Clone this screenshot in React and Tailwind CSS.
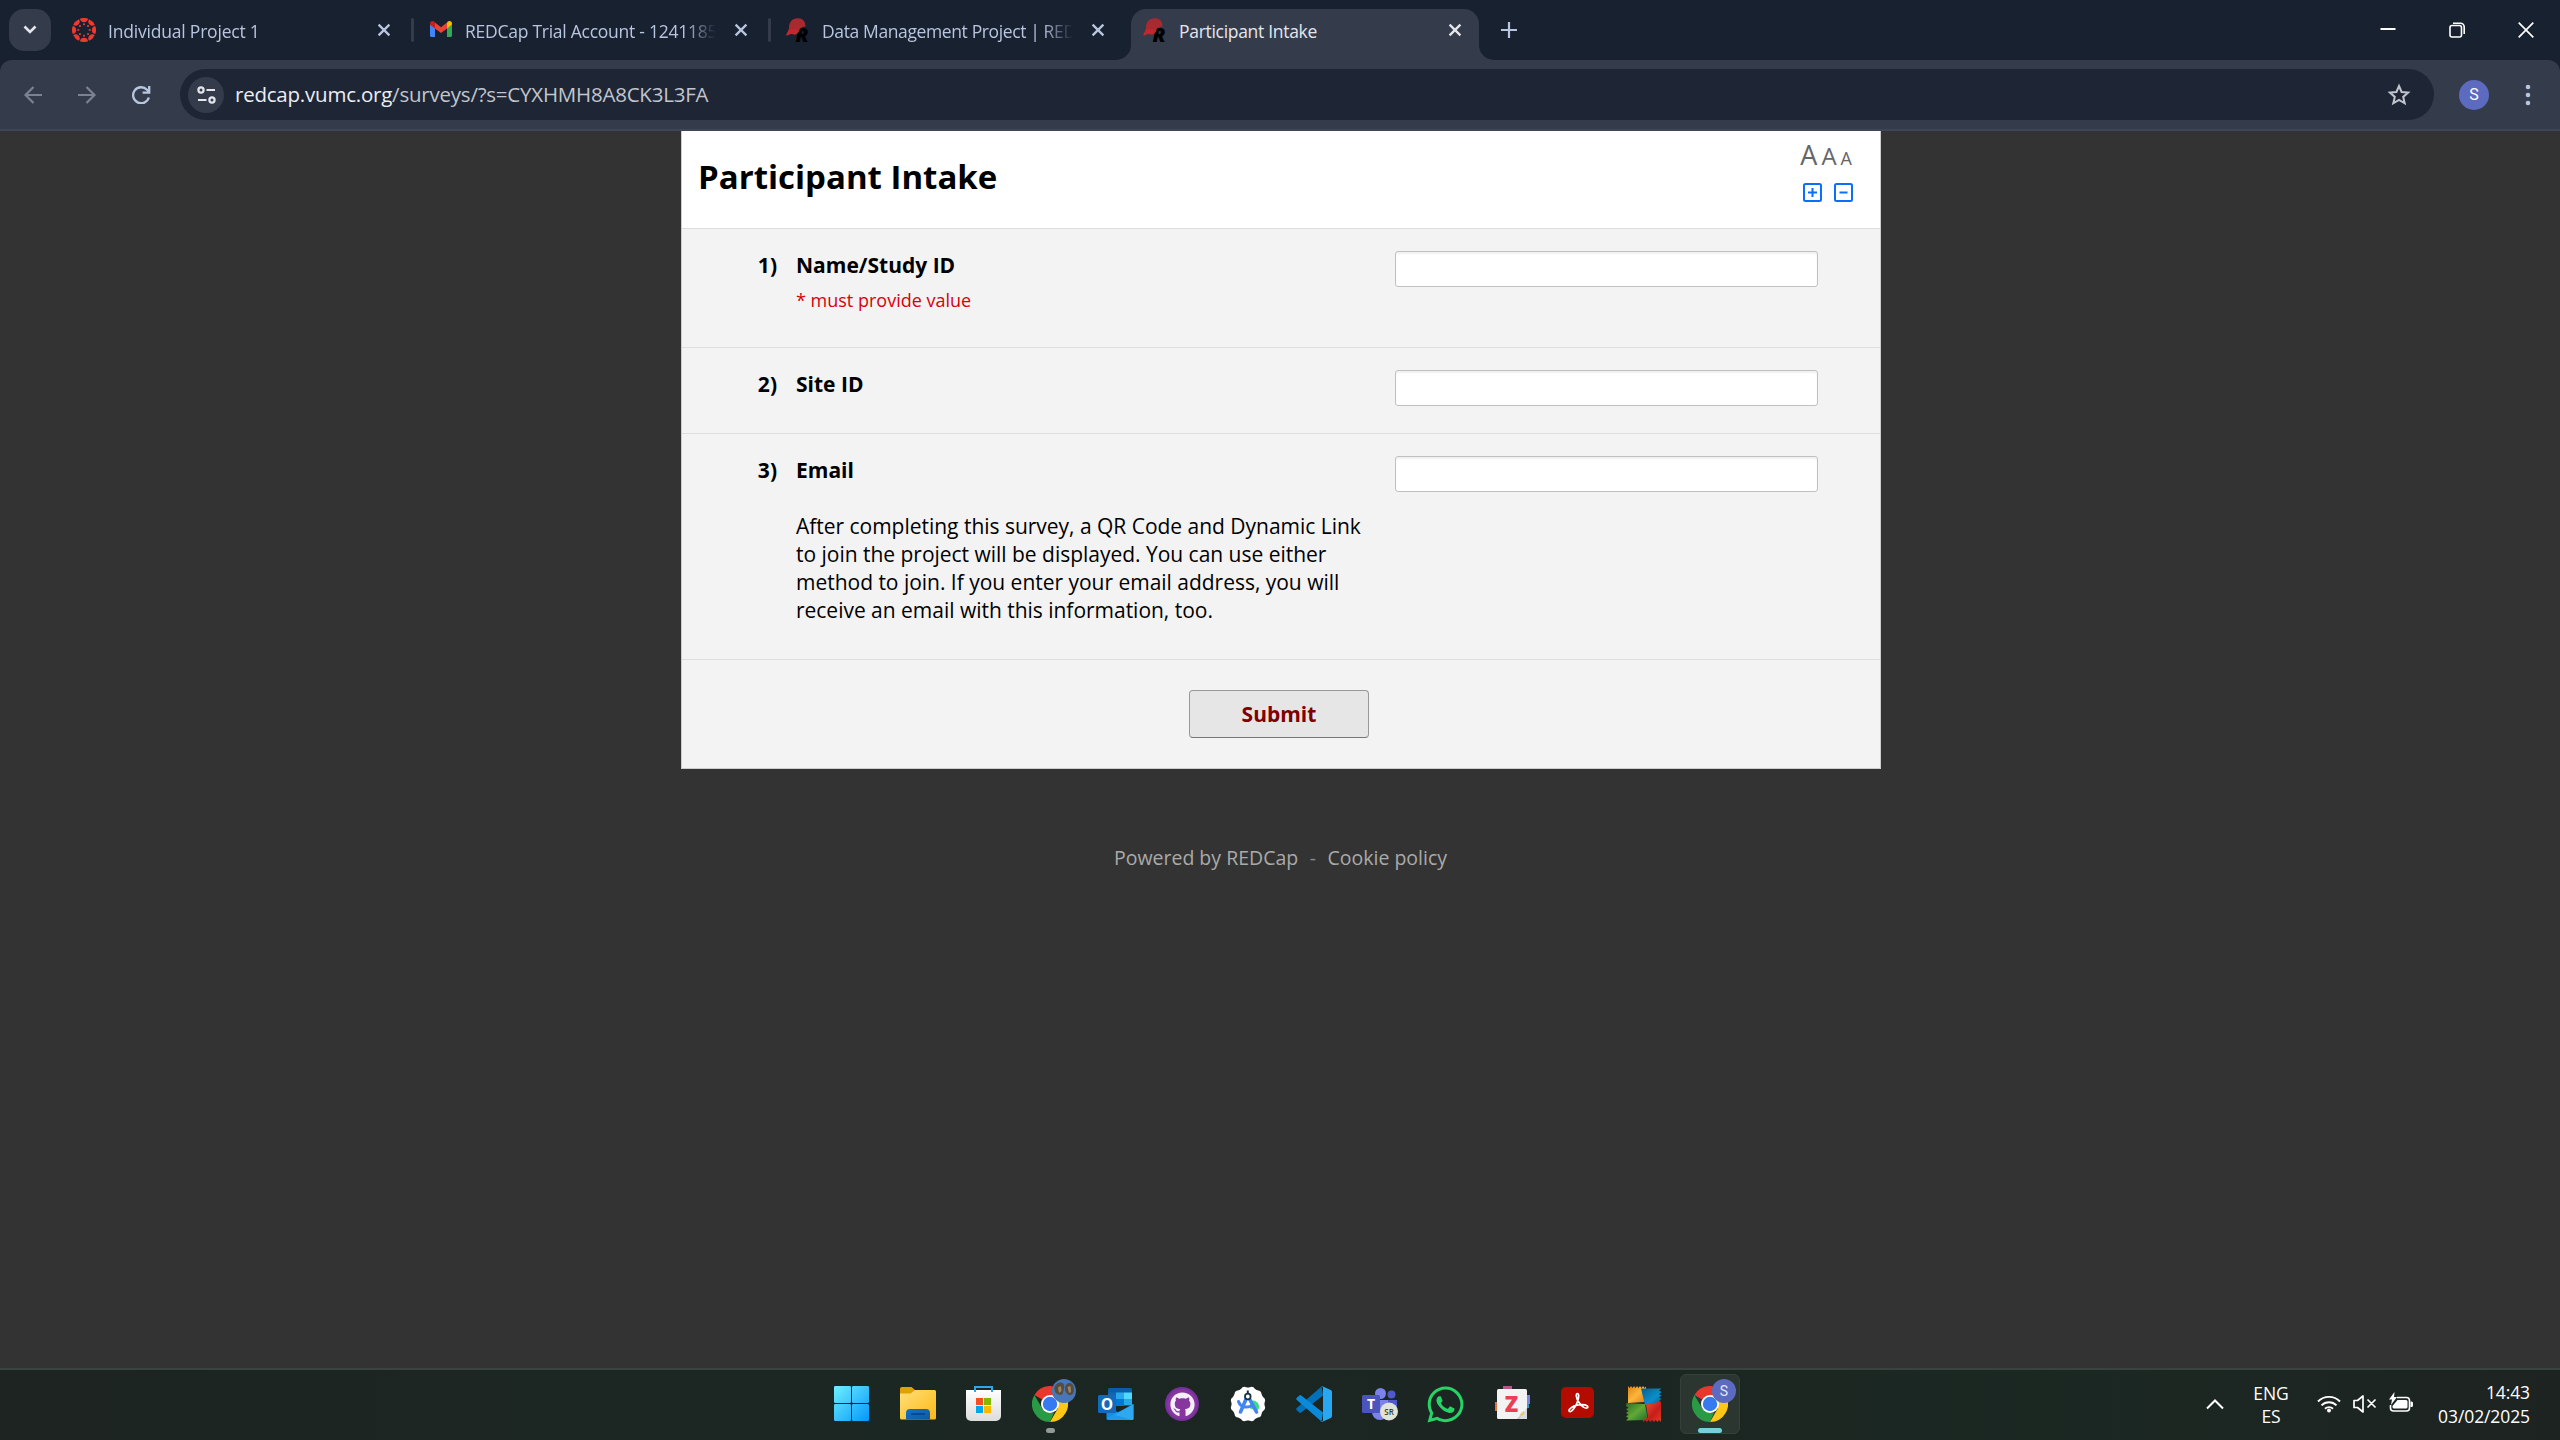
import React from "react";
import { FaGithub, FaWhatsapp } from "react-icons/fa";

const CanvasLogo = () => (
  <svg width="24" height="24" viewBox="0 0 24 24" fill="#ee3a2e">
    {[0, 45, 90, 135, 180, 225, 270, 315].map((a) => (
      <g key={a} transform={`rotate(${a} 12 12)`}>
        <path d="M7.9 .8 Q12 -.9 16.1 .8 A4.200 4.300 0 0 1 7.9 .8Z" />
        <circle cx="12" cy="6.300" r="1.050" />
      </g>
    ))}
  </svg>
);

const GmailLogo = () => (
  <svg width="24" height="24" viewBox="0 0 24 24">
    <path d="M1 7v10.500A1.500 1.500 0 0 0 2.500 19H6V9.700L1 6z" fill="#4285f4" />
    <path d="M18 9.700V19h3.500a1.500 1.500 0 0 0 1.500-1.500V6z" fill="#34a853" />
    <path d="M18 4.700v5.700l5-3.800V5.400C23 3.200 20.500 2.200 18.800 3.500z" fill="#fbbc04" />
    <path d="M6 10.400V4.600l6 4.600 6-4.600v5.800L12 15z" fill="#ea4335" />
    <path d="M1 5.400v1.300l5 3.800V4.700L5.200 3.500C3.500 2.200 1 3.200 1 5.400z" fill="#c5221f" />
  </svg>
);

const RedcapLogo = () => (
  <svg width="24" height="24" viewBox="0 0 24 24">
    <text x="9.500" y="24" fontSize="20" fontWeight="800" fontStyle="italic" fontFamily="Open Sans, sans-serif" fill="#000">R</text>
    <path d="M3 11C2.500 4 6.500 .3 11.500 .2c4-.1 6.500 1.500 7.500 4.800l.6 3.600c-3 .2-5 1.200-6 3-.6 2.500-2 4-4.500 5-1.500-.5-2.500-.8-4-.6-1.800.2-3 .8-4.100 1.800-.8-.6-.8-1.500 0-2.600z" fill="#a8292f" />
    <path d="M3 11.500c3.500-.8 7-.3 10.400.6-.8 2.300-2.200 3.700-4.300 4.500-3-.9-5.500-.8-8.100 1.200-.6-.9-.4-1.800.3-2.800z" fill="#c1272d" />
  </svg>
);

const Close = ({ color }) => (
  <svg width="14" height="14" viewBox="0 0 14 14" stroke={color} strokeWidth="2.300" className="shrink-0">
    <path d="M1.600 1.600l10.800 10.800M12.400 1.600L1.600 12.400" />
  </svg>
);

const Tab = ({ icon, title, active, spacing }) => (
  <div
    className={
      active
        ? "relative flex h-[51px] w-[348px] shrink-0 items-start rounded-t-[15px] bg-[#343c4c] pt-[9px] pl-3"
        : "flex h-[51px] w-[348px] shrink-0 items-start pt-[9px] pl-3"
    }
  >
    {active && (
      <>
        <svg className="absolute bottom-0 left-[-15px]" width="15" height="15" fill="#343c4c"><path d="M15 0v15H0A15 15 0 0 0 15 0z" /></svg>
        <svg className="absolute right-[-15px] bottom-0" width="15" height="15" fill="#343c4c"><path d="M0 0v15h15A15 15 0 0 1 0 0z" /></svg>
      </>
    )}
    {icon}
    <div
      className={`ml-3 h-[26px] w-[251px] overflow-hidden whitespace-nowrap text-[17.5px] leading-[26px] ${spacing} ${
        active ? "text-[#e4e6ec]" : "text-[#b8c5de] [mask-image:linear-gradient(to_right,#000_220px,transparent_251px)]"
      }`}
    >
      {title}
    </div>
    <div className="ml-[18px] flex h-6 items-center"><Close color={active ? "#e4e6ec" : "#b8c5de"} /></div>
  </div>
);

const Divider = () => (
  <div className="flex h-[42px] w-[9px] shrink-0 items-center justify-center"><div className="h-6 w-[3px] rounded bg-[#343c4c]" /></div>
);

const TabStrip = () => (
  <div className="flex h-[60px] bg-[#182130] pt-[9px]">
    <div className="ml-[9px] flex size-[42px] shrink-0 items-center justify-center rounded-[15px] bg-[#343c4c]">
      <svg width="14" height="10" viewBox="0 0 14 10" fill="none" stroke="#e4e6ec" strokeWidth="2.600"><path d="M1.500 1.500L7 7l5.500-5.500" /></svg>
    </div>
    <div className="ml-[9px] flex">
      <Tab icon={<CanvasLogo />} title="Individual Project 1" spacing="tracking-[-0.2px]" />
      <Divider />
      <Tab icon={<GmailLogo />} title="REDCap Trial Account - 124118&#53;" spacing="tracking-[-0.26px]" />
      <Divider />
      <Tab icon={<RedcapLogo />} title="Data Management Project | RED" spacing="tracking-[-0.38px]" />
      <div className="w-[9px]" />
      <Tab icon={<RedcapLogo />} title="Participant Intake" active spacing="tracking-[-0.3px]" />
    </div>
    <svg className="mt-[13px] ml-[22px]" width="16" height="16" stroke="#b8c5de" strokeWidth="2.200"><path d="M8 0v16M0 8h16" /></svg>
    <div className="mt-[13px] mr-[26px] ml-auto flex gap-[53px]">
      <svg width="16" height="16" stroke="#fff" strokeWidth="2"><path d="M.500 7h15" /></svg>
      <svg width="16" height="16" fill="none" stroke="#fff" strokeWidth="1.600">
        <rect x="1" y="3.500" width="11.500" height="11.500" rx="2" />
        <path d="M4 1.200h7.500a3.700 3.700 0 0 1 3.700 3.700V12" />
      </svg>
      <svg width="16" height="16" stroke="#fff" strokeWidth="1.700"><path d="M.7.7l14.600 14.600M15.300.7L.7 15.300" /></svg>
    </div>
  </div>
);

const Toolbar = () => (
  <div className="bg-[#182130]">
    <div className="flex h-[71px] items-start rounded-t-[12px] border-b-2 border-[#3f4757] bg-[#343c4c] pt-[9px]">
      <div className="ml-6 flex h-[51px] items-center">
        <svg width="18" height="18" fill="none" stroke="#7d8290" strokeWidth="2.200"><path d="M18 9H2M9.500 1L1.500 9l8 8" /></svg>
        <svg className="ml-9" width="18" height="18" fill="none" stroke="#7d8290" strokeWidth="2.200"><path d="M0 9h16M8.500 1l8 8-8 8" /></svg>
        <svg className="ml-9" width="19" height="18" fill="none" stroke="#b8c5de" strokeWidth="2.300"><path d="M16.800 11.500A8 8 0 1 1 15 3.800L17 6" /><path d="M17.200 0v6.600h-6.600" /></svg>
      </div>
      <div className="ml-[29px] flex h-[51px] w-[2254px] items-center rounded-full bg-[#1e2636] pl-2">
        <div className="flex size-9 items-center justify-center rounded-full bg-[#343c4c]">
          <svg width="19" height="18" fill="none" stroke="#e4e6ec" strokeWidth="2.200">
            <circle cx="4" cy="4" r="2.600" /><path d="M9.500 4H18M1 14h8.500" /><circle cx="15" cy="14" r="2.600" />
          </svg>
        </div>
        <div className="mb-[2px] ml-[11px] text-[20.500px] leading-7 tracking-[-0.22px] text-[#c2c5cc]">
          <span className="text-[#eceef2]">redcap.vumc.org</span>/surveys/?s=CYXHMH8A8CK3L3FA
        </div>
        <svg className="mr-[23px] ml-auto" width="24" height="24" viewBox="0 0 24 24" fill="none" stroke="#c2c5cc" strokeWidth="2">
          <path d="M12 3l2.600 6 6.500.6-4.900 4.300 1.500 6.400-5.700-3.400-5.700 3.400 1.500-6.400L2.900 9.600 9.400 9z" />
        </svg>
      </div>
      <div className="mt-[11px] ml-[25px] flex size-[30px] items-center justify-center rounded-full bg-[#5c6bc0] font-[Roboto,sans-serif] text-[16px] text-white">S</div>
      <svg className="mt-[15px] ml-[36px]" width="6" height="22" fill="#b8c5de"><circle cx="3" cy="3" r="2.300" /><circle cx="3" cy="11" r="2.300" /><circle cx="3" cy="19" r="2.300" /></svg>
    </div>
  </div>
);

const Question = ({ number, label, height, children }) => (
  <div className={`flex border-b border-[#ddd] ${height}`}>
    <div className="mt-[22px] w-[95px] text-right leading-7 font-bold">{number})</div>
    <div className="mt-[22px] ml-[19px] w-[580px]">
      <div className="leading-7 font-bold">{label}</div>
      {children}
    </div>
    <input className="mt-[22px] ml-[19px] h-9 w-[423px] rounded-[3px] border border-[#c0c0c0] bg-white shadow-[inset_0_2px_2px_rgba(0,0,0,0.06)]" />
  </div>
);

const Survey = () => (
  <main className="flex h-[1237px] flex-col items-center bg-[#333] pl-[2px] text-[21px] text-black">
    <div className="w-[1200px] border-x border-b border-[#ccc] bg-[#f3f3f3]">
      <div className="flex h-[98px] justify-between border-b border-[#ddd] bg-white">
        <h1 className="mt-6 ml-4 text-[33px] leading-[44px] font-bold">Participant Intake</h1>
        <div className="mr-[27px] flex flex-col items-end">
          <div className="mt-[10px] mr-[1px] flex h-[28px] items-baseline gap-1 leading-7 text-[#666]">
            <span className="text-[27px]">A</span><span className="text-[24px]">A</span><span className="text-[18px]">A</span>
          </div>
          <div className="mt-[14px] flex gap-[12px]">
            <svg width="19" height="19" fill="none" stroke="#0d6efd" strokeWidth="2"><rect x="1" y="1" width="17" height="17" rx="1.500" /><path d="M9.500 5v9M5 9.500h9" /></svg>
            <svg width="19" height="19" fill="none" stroke="#0d6efd" strokeWidth="2"><rect x="1" y="1" width="17" height="17" rx="1.500" /><path d="M5.500 9.500h8" /></svg>
          </div>
        </div>
      </div>
      <Question number={1} label="Name/Study ID" height="h-[119px]">
        <div className="mt-[7px] text-[18px] leading-7 text-[#d8000c]">* must provide value</div>
      </Question>
      <Question number={2} label="Site ID" height="h-[86px]" />
      <Question number={3} label="Email" height="h-[226px]">
        <p className="mt-7 leading-7 tracking-[-0.02px]">
          After completing this survey, a QR Code and Dynamic Link<br />
          to join the project will be displayed. You can use either<br />
          method to join. If you enter your email address, you will<br />
          receive an email with this information, too.
        </p>
      </Question>
      <div className="flex h-[108px] justify-center pt-[30px] pr-1">
        <button className="h-12 w-[180px] rounded-[4px] border border-[#999] border-b-[#777] bg-[#e6e6e6] pt-[2px] text-[21px] font-bold text-[#800000]">Submit</button>
      </div>
    </div>
    <footer className="mt-[75px] flex pr-[1px] text-[19.500px] leading-7 text-[#aaa]">
      <span>Powered by REDCap</span><span className="mx-[11.500px] text-[#888]">-</span><span>Cookie policy</span>
    </footer>
  </main>
);

const Windows = () => (
  <svg width="36" height="36" viewBox="0 0 36 36">
    <defs><linearGradient id="win" x1="0" y1="0" x2="36" y2="36" gradientUnits="userSpaceOnUse"><stop stopColor="#6ff0ff" /><stop offset="1" stopColor="#0094fb" /></linearGradient></defs>
    <g fill="url(#win)"><rect y="0" width="17" height="17" rx="1.300" /><rect x="18" width="17" height="17" rx="1.300" /><rect y="18" width="17" height="17" rx="1.300" /><rect x="18" y="18" width="17" height="17" rx="1.300" /></g>
  </svg>
);

const Explorer = () => (
  <svg width="36" height="36" viewBox="0 0 36 36">
    <defs><linearGradient id="fold" x1="0" y1="0" x2="1" y2="1"><stop stopColor="#ffe07a" /><stop offset="1" stopColor="#fdb713" /></linearGradient>
      <linearGradient id="foldb" x1="0" y1="0" x2="1" y2="1"><stop stopColor="#1173c9" /><stop offset="1" stopColor="#0f5aa0" /></linearGradient></defs>
    <path d="M0 3a2 2 0 0 1 2-2h9.500l4 3.500V8H0z" fill="#e0a106" />
    <path d="M0 7.500h10.500L15 4h19.500A1.500 1.500 0 0 1 36 5.500V32a1.500 1.500 0 0 1-1.500 1.500h-33A1.500 1.500 0 0 1 0 32z" fill="url(#fold)" />
    <path d="M6 33.500V27a4 4 0 0 1 4-4h16a4 4 0 0 1 4 4v6.500z" fill="url(#foldb)" />
    <path d="M11 28h14" stroke="#0a3f78" strokeWidth="1.500" />
  </svg>
);

const Store = () => (
  <svg width="36" height="36" viewBox="0 0 36 36">
    <defs><linearGradient id="store" x1="0" y1="0" x2="0" y2="1"><stop stopColor="#fff" /><stop offset="1" stopColor="#dcdcdc" /></linearGradient></defs>
    <path d="M0 4h35v26a5 5 0 0 1-5 5h-25a5 5 0 0 1-5-5z" fill="url(#store)" />
    <path d="M9 6V1h17v5" fill="none" stroke="#2ba8e6" strokeWidth="2" />
    <path fill="#f25022" d="M10 12h7v7h-7z" /><path fill="#7fba00" d="M18 12h7v7h-7z" /><path fill="#00a4ef" d="M10 20h7v7h-7z" /><path fill="#ffb900" d="M18 20h7v7h-7z" />
  </svg>
);

const Chrome = () => (
  <svg width="36" height="36" viewBox="0 0 36 36">
    <path d="M18 18L2.400 9A18 18 0 0 1 33.600 9z" fill="#e8372b" />
    <path d="M18 9h15.600A18 18 0 0 1 18 36l7.800-13.500z" fill="#fdc716" />
    <path d="M2.400 9l7.800 13.500L18 27l4-.3L18 36A18 18 0 0 1 2.400 9z" fill="#2b9a45" />
    <circle cx="18" cy="18" r="9" fill="#fff" /><circle cx="18" cy="18" r="7.200" fill="#357af0" />
  </svg>
);

const Outlook = () => (
  <svg width="36" height="36" viewBox="0 0 36 36">
    <path d="M10 3.500A1.500 1.500 0 0 1 11.500 2h21A1.500 1.500 0 0 1 34 3.500V20H10z" fill="#0a5ea8" />
    <path d="M10 6.500h8V13h-8z" fill="#1066b5" /><path d="M18 6.500h8V13h-8z" fill="#28a8ea" /><path d="M26 6.500h8V13h-8z" fill="#50d9ff" />
    <path d="M18 13h8v7h-8z" fill="#0078d4" /><path d="M26 13h8v6h-8z" fill="#28a8ea" />
    <path d="M8.500 20v12.500A1.500 1.500 0 0 0 10 34h24z" fill="#1490df" /><path d="M35.500 18v14.500A1.500 1.500 0 0 1 34 34H12l-3-2z" fill="#2197e8" />
    <path d="M35.500 18L17 29l17 5a1.500 1.500 0 0 0 1.500-1.500z" fill="#35b1f5" opacity=".7" />
    <rect y="9" width="18" height="18" rx="1.500" fill="#0f6cbd" />
    <text x="9" y="23.500" fontSize="15.500" fontWeight="700" textAnchor="middle" fontFamily="Open Sans, sans-serif" fill="#fff">O</text>
  </svg>
);

const Github = () => (
  <div className="mt-[1px] flex size-[34px] items-center justify-center rounded-full border-2 border-[#75309b] bg-[#87359f]"><FaGithub size={25} color="#f5effa" /></div>
);

const AndroidStudio = () => (
  <svg width="36" height="36" viewBox="0 0 36 36">
    <g fill="#fff">{[0, 30, 60].map((a) => <rect key={a} x="4.500" y="4.500" width="27" height="27" rx="4" transform={`rotate(${a} 18 18)`} />)}<circle cx="18" cy="18" r="16.500" /></g>
    <path d="M20 15.500a6 6 0 0 1 9 5.500c0 2-1 3-2 3.500l-7-2z" fill="#3ddc84" />
    <g fill="none" stroke="#4285f4" strokeLinecap="round"><path d="M16.500 12L10.500 26M19 12l7.500 14" strokeWidth="3.600" /><path d="M8.500 15.500c1.500 5 7 7 12.500 4.500" strokeWidth="3" /></g>
    <circle cx="17.800" cy="10.500" r="2.800" fill="#fff" stroke="#173340" strokeWidth="1.800" /><path d="M17.800 4.500v3" stroke="#173340" strokeWidth="2" />
  </svg>
);

const VsCode = () => (
  <svg width="36" height="36" viewBox="0 0 36 36">
    <path d="M27 9.500L5.200 26.500a1.600 1.600 0 0 1-2 0L.8 24.300a1.500 1.500 0 0 1 0-2.200L25.500.6z" fill="#0070b8" />
    <path d="M27 26.500L5.200 9.500a1.600 1.600 0 0 0-2 0L.8 11.700a1.500 1.500 0 0 0 0 2.200l24.700 21.500z" fill="#0a8ad8" />
    <path d="M26.500 35.800a2.200 2.200 0 0 1-2.500-.5c1 .8 3 .2 3-1.300V2c0-1.500-2-2.100-3-1.300a2.200 2.200 0 0 1 2.500-.5l8.200 3.900A2.200 2.200 0 0 1 36 6v24a2.200 2.200 0 0 1-1.300 1.900z" fill="#28a8f3" />
  </svg>
);

const Teams = () => (
  <svg width="36" height="36" viewBox="0 0 36 36">
    <circle cx="18.500" cy="7.500" r="5.500" fill="#7b83eb" /><circle cx="29.500" cy="8.500" r="4" fill="#5059c9" />
    <path d="M23 14h12v9a6 6 0 0 1-12 2z" fill="#5059c9" /><path d="M10 14h16v12a8 8 0 0 1-16 0z" fill="#7b83eb" />
    <rect y="9" width="18" height="18" rx="1.500" fill="#4b53bc" />
    <text x="9" y="23" fontSize="14" fontWeight="700" textAnchor="middle" fontFamily="Open Sans, sans-serif" fill="#fff">T</text>
    <circle cx="27" cy="25.500" r="9" fill="#dfe3d8" />
    <text x="27" y="28.500" fontSize="8" fontWeight="600" textAnchor="middle" fontFamily="Open Sans, sans-serif" fill="#34402c">SR</text>
  </svg>
);

const Zotero = () => (
  <svg width="36" height="36" viewBox="0 0 36 36">
    <path d="M8 0h9v5H8z" fill="#b5568c" /><path d="M0 16h5v9H0z" fill="#e0703c" /><path d="M31 9h4v9h-4z" fill="#7a84e8" /><path d="M30 18h4v4h-4z" fill="#2f9fc0" />
    <path d="M3.500 3h27A1.500 1.500 0 0 1 32 4.500V24l-9 9H3.500A1.500 1.500 0 0 1 2 31.500v-27A1.500 1.500 0 0 1 3.500 3z" fill="#f3f3f4" />
    <path d="M32 23v10h-9z" fill="#d9dadd" /><path d="M32 22c-1 4-3 4-6 4.500-.500 3-1.500 5-4 6.500z" fill="#fff" stroke="#ccc" strokeWidth=".5" /><path d="M25 29l4-4v3l-3 2z" fill="#f0c340" />
    <text x="16.500" y="25.500" fontSize="22" fontWeight="800" textAnchor="middle" fontFamily="Open Sans, sans-serif" fill="#ea3f55">Z</text>
  </svg>
);

const Acrobat = () => (
  <svg width="36" height="36" viewBox="0 0 36 36">
    <rect x="1" y="1" width="33" height="31" rx="5" fill="#b30b00" />
    <path d="M17.500 7.500c-2 0-1.500 4.500 1.500 9 2.500 4 6.500 6.500 8.300 5.300 1.700-1.200-.8-3.300-5.300-3.200-5 .1-10.500 2.200-12.500 4.700-1.500 2.200.8 3.300 3 .8 2.800-3 5.200-8.300 6-12.300.4-2.500.1-4.300-1-4.300z" fill="none" stroke="#fff" strokeWidth="1.700" />
  </svg>
);

const Avg = () => (
  <svg width="36" height="36" viewBox="0 0 36 36">
    <defs>
      <linearGradient id="avo" x1="0" y1="0" x2="1" y2="1"><stop stopColor="#e08018" /><stop offset=".5" stopColor="#fbb63a" /><stop offset="1" stopColor="#e07b12" /></linearGradient>
      <linearGradient id="avb" x1="0" y1="0" x2="1" y2="1"><stop stopColor="#0b5c8c" /><stop offset=".6" stopColor="#0a8fcb" /><stop offset="1" stopColor="#0a5d8e" /></linearGradient>
      <linearGradient id="avg" x1="0" y1="0" x2="1" y2="1"><stop stopColor="#2a6f22" /><stop offset=".5" stopColor="#62a838" /><stop offset="1" stopColor="#1d6b2d" /></linearGradient>
      <linearGradient id="avr" x1="0" y1="0" x2="1" y2="1"><stop stopColor="#f0582a" /><stop offset=".6" stopColor="#c91c1c" /><stop offset="1" stopColor="#d8431d" /></linearGradient>
    </defs>
    <path d="M2 0l1.500 2 1.500-2 1.500 2L8 0l1.500 2L11 0l1.500 2L14 0l1.500 2L17 0l1.500 2L20 .500V4l-4 1 3 11-17 1z" fill="url(#avo)" />
    <path d="M15 2.500h20.500l-2.500 2 2.500 1.500-2.500 2 2.500 1.500-2.500 2 2.500 1.500-2.500 2 2 1.500L19 19z" fill="url(#avb)" />
    <path d="M.500 17l18.500 1 3 16-22 .500L2.500 32 0 30.500 2.500 28.500 0 27l2.500-2L0 23.500 2.500 21.500 0 20z" fill="url(#avg)" />
    <path d="M20 18.500l15-3V36l-2-2-1.500 2-2-2-1.500 2-2-2-1.500 2-2-2-1.500 2-2-2-2 2v-3l5-1z" fill="url(#avr)" />
  </svg>
);

const AppSlot = ({ children, running, focused, badge }) => (
  <div className={focused ? "relative flex h-[60px] w-[60px] justify-center rounded-[6px] border border-[#354039] bg-[#2b3631] pt-[11px]" : "relative flex h-[60px] w-[60px] justify-center pt-3"}>
    {children}
    {badge}
    {running && <div className="absolute bottom-[1px] h-[5px] w-[9px] rounded-full bg-[#929a96]" />}
    {focused && <div className="absolute bottom-0 h-[5px] w-6 rounded-full bg-[#76d0da]" />}
  </div>
);

const Taskbar = () => (
  <div className="flex h-[72px] border-t-2 border-[#3a443f] bg-[linear-gradient(90deg,#1d2421,#1b2722_35%,#1c2521_60%,#1b2822_80%,#1d2321)] text-white">
    <div className="mt-1 ml-[822px] flex gap-[6px]">
      <AppSlot><Windows /></AppSlot>
      <AppSlot><Explorer /></AppSlot>
      <AppSlot><Store /></AppSlot>
      <AppSlot
        running
        badge={
          <svg className="absolute top-[5px] right-[4px]" width="24" height="24">
            <circle cx="12" cy="12" r="12" fill="#4777b8" />
            <path d="M2.500 10c0-4 3-6.500 6-6.500s4 2 3.500 6l-1.500 5.500c-1 1.500-2.500 1-4 .5-2.500-1-4-2.500-4-5.500zM13 9c0-3 2-5 5-5s4 4 4 7-2 5.500-4.500 5S13 13 13 9z" fill="#564d3e" />
            <path d="M6 8.500l3-1.500.5 5-2.500 2zM15.500 8l3-1 .5 6-2 1z" fill="#9c8468" />
          </svg>
        }
      ><Chrome /></AppSlot>
      <AppSlot><Outlook /></AppSlot>
      <AppSlot><Github /></AppSlot>
      <AppSlot><AndroidStudio /></AppSlot>
      <AppSlot><VsCode /></AppSlot>
      <AppSlot><Teams /></AppSlot>
      <AppSlot><FaWhatsapp size={41} color="#25d366" className="mt-[-2px] mr-[1px] shrink-0" /></AppSlot>
      <AppSlot><div className="ml-[1px]"><Zotero /></div></AppSlot>
      <AppSlot><Acrobat /></AppSlot>
      <AppSlot><Avg /></AppSlot>
      <AppSlot focused badge={<div className="absolute top-[4px] right-[3px] flex size-6 items-center justify-center rounded-full bg-[#5c6bc0] font-[Roboto,sans-serif] text-[14px] text-[#e3e6f5]">S</div>}>
        <Chrome />
      </AppSlot>
    </div>
    <div className="mr-[30px] ml-auto flex items-start text-[17.500px] leading-6 tracking-[-0.1px]">
      <svg className="mt-[28px]" width="18" height="12" fill="none" stroke="#fff" strokeWidth="2"><path d="M1 10.500l8-8 8 8" /></svg>
      <div className="mt-3 ml-[27px] w-[40px] text-center leading-[23px]">ENG<br />ES</div>
      <svg className="mt-[24px] ml-[26px]" width="24" height="20" fill="none" stroke="#fff" strokeWidth="1.900">
        <path d="M1 7.500a15.500 15.500 0 0 1 22 0M4.500 11.300a10.600 10.600 0 0 1 15 0M8 14.800a5.700 5.700 0 0 1 8 0" /><circle cx="12" cy="16.500" r="2" fill="#fff" stroke="none" />
      </svg>
      <svg className="mt-[25px] ml-[12px]" width="24" height="18" fill="none" stroke="#fff" strokeWidth="1.700" strokeLinejoin="round"><path d="M1 5.500h3.500L10 1v16l-5.500-4.500H1zM14.500 4.500l8 8M22.500 4.500l-8 8" /></svg>
      <svg className="mt-[22px] ml-[12px]" width="24" height="22" fill="none">
        <path d="M8 5.500h9.500a3 3 0 0 1 3 3v7.500a3 3 0 0 1-3 3h-13a3 3 0 0 1-3-3v-3" stroke="#fff" strokeWidth="1.600" /><path d="M8.500 8H17a1.500 1.500 0 0 1 1.500 1.500V15a1.500 1.500 0 0 1-1.500 1.500H5A1.500 1.500 0 0 1 3.500 15v-1z" fill="#fff" />
        <path d="M21.500 9.500h1a1.500 1.500 0 0 1 1.500 1.500v2.500a1.500 1.500 0 0 1-1.500 1.500h-1zM5.500 0L0 7.500h3L2 13l6-8H5z" fill="#fff" />
      </svg>
      <div className="mt-[10px] w-[117px] text-right">14:43<br />03/02/2025</div>
    </div>
  </div>
);

export default function App() {
  return (
    <div className="h-[1440px] w-[2560px] overflow-hidden font-['Open_Sans',sans-serif]">
      <TabStrip />
      <Toolbar />
      <Survey />
      <Taskbar />
    </div>
  );
}
